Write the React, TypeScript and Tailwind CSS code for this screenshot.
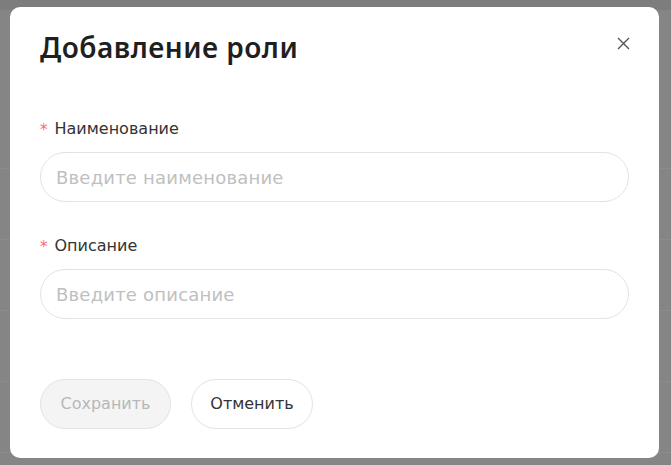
import React from 'react';

const Field: React.FC<{ label: string; placeholder: string }> = ({ label, placeholder }) => {
  return (
    <div className="flex flex-col">
      <div className="flex items-center h-[22px] text-[16px] text-[#333333]">
        <span className="text-[#ff6b6b] mr-[7px] text-[15px] mt-[2px]">*</span>
        <span>{label}</span>
      </div>
      <input
        readOnly
        placeholder={placeholder}
        className="mt-[12px] h-[50px] w-full rounded-full border border-[#e3e3e3] px-[15px] text-[18px] tracking-[0.2px] placeholder:text-[#c0c0c0] outline-none"
      />
    </div>
  );
};

export default function App() {
  const rows = [0, 1, 2, 3, 4];
  return (
    <div
      className="relative w-[671px] h-[465px] overflow-hidden bg-[#858585]"
      style={{ fontFamily: '"Noto Sans", sans-serif' }}
    >
      {/* page behind the overlay */}
      <div className="flex flex-col">
        <div className="h-[10px] bg-[#7d7d7d]" />
        <div className="h-[158px]" />
        {rows.map((r) => (
          <div key={r} className="h-[71px] border-t border-[#8c8c8c]" />
        ))}
      </div>

      <div className="absolute left-[10px] top-[7px] w-[649px] h-[451px] rounded-[10px] bg-white px-[30px] pt-[22px]">
        <div className="flex items-start justify-between">
          <h1 className="text-[28px] font-semibold text-[#1f1f1f] leading-[36px] tracking-[0.5px]">Добавление роли</h1>
          <button className="mt-[8px] mr-[-1px] text-[#555]">
            <svg width="13" height="13" viewBox="0 0 13 13" fill="none" stroke="currentColor" strokeWidth="1.4">
              <path d="M1 1L12 12M12 1L1 12" />
            </svg>
          </button>
        </div>

        <div className="mt-[53px] flex flex-col gap-[33px]" style={{ fontFamily: '"DejaVu Sans", sans-serif' }}>
          <Field label="Наименование" placeholder="Введите наименование" />
          <Field label="Описание" placeholder="Введите описание" />
        </div>

        <div className="mt-[60px] flex gap-[20px]" style={{ fontFamily: '"DejaVu Sans", sans-serif' }}>
          <button className="h-[50px] w-[131px] rounded-full border border-[#e3e3e3] bg-[#f4f4f4] text-[16px] text-[#b8b8b8]">
            Сохранить
          </button>
          <button className="h-[50px] w-[122px] rounded-full border border-[#e3e3e3] bg-white text-[16px] text-[#333333]">
            Отменить
          </button>
        </div>
      </div>
    </div>
  );
}
